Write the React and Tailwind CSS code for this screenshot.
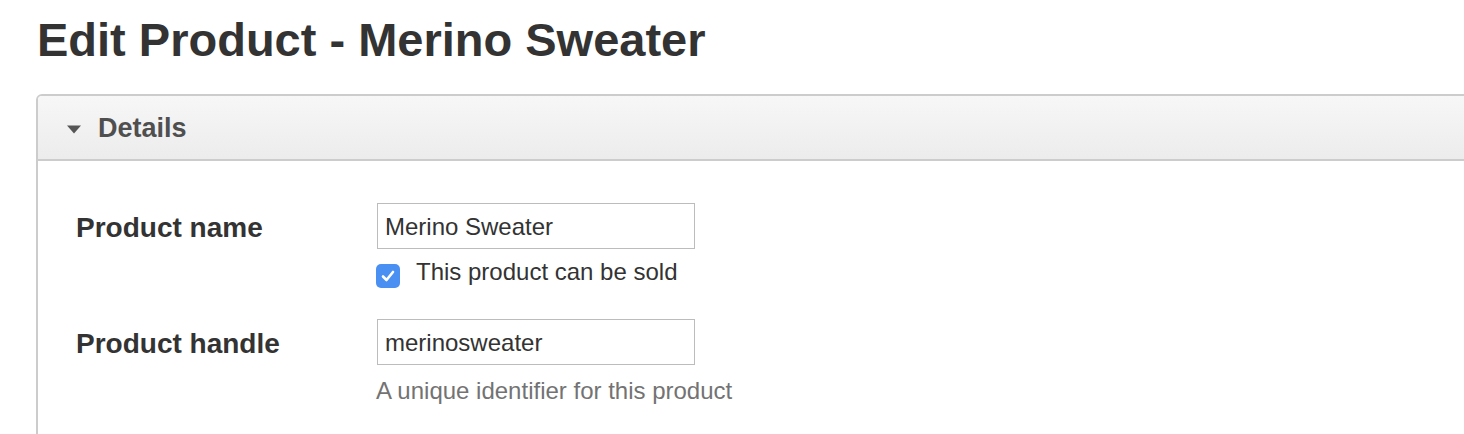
export default function App() {
  return (
    <div className="w-[1464px] h-[434px] overflow-hidden bg-white text-[#333] font-['Liberation_Sans',Arial,Helvetica,sans-serif]">
      <div className="pl-[37px] pt-[14px]">
        <h1 className="text-[47px] leading-[52px] font-bold text-[#333] m-0">
          Edit Product - Merino Sweater
        </h1>
      </div>
      <div className="mt-[28px] ml-[36px] mr-[-40px] border-2 border-[#cccccc] rounded-tl-[6px] rounded-tr-[6px] h-[600px] overflow-hidden">
        <div className="h-[65px] flex items-center pl-[28px] bg-gradient-to-b from-[#f7f7f7] to-[#ececec] border-b-2 border-[#cccccc]">
          <svg width="16" height="9" viewBox="0 0 16 9" className="mt-[3px]">
            <polygon points="1,0.5 15,0.5 8,8.5" fill="#555555" />
          </svg>
          <span className="ml-[16px] mt-[2px] text-[27px] font-bold text-[#4f4f4f] leading-none">
            Details
          </span>
        </div>
        <div className="bg-white pt-[42px] pl-[38px]">
          <div className="grid grid-cols-[301px_1fr]">
            <div className="text-[28px] leading-[46px] pt-[2px] font-bold text-[#333]">
              Product name
            </div>
            <div>
              <div className="w-[318px] h-[46px] border border-[#bcbcbc] bg-white flex items-center pl-[7px] pt-[1px] text-[24px] text-[#333]">
                Merino Sweater
              </div>
              <div className="mt-[9px] flex items-start">
                <div className="ml-[-1px] mt-[6px] w-[24px] h-[24px] rounded-[5px] bg-[#4a8ff2] flex items-center justify-center">
                  <svg width="20" height="20" viewBox="0 0 20 20">
                    <path
                      d="M5 10.5 L8.5 14 L15 6"
                      fill="none"
                      stroke="white"
                      strokeWidth="2.6"
                      strokeLinecap="round"
                      strokeLinejoin="round"
                    />
                  </svg>
                </div>
                <span className="ml-[16px] text-[24px] leading-[28px] text-[#333]">
                  This product can be sold
                </span>
              </div>
            </div>
          </div>
          <div className="grid grid-cols-[301px_1fr] mt-[31px]">
            <div className="text-[28px] leading-[46px] pt-[2px] font-bold text-[#333]">
              Product handle
            </div>
            <div>
              <div className="w-[318px] h-[46px] border border-[#bcbcbc] bg-white flex items-center pl-[7px] pt-[1px] text-[24px] text-[#333]">
                merinosweater
              </div>
              <div className="mt-[12px] ml-[-1px] text-[24px] leading-[28px] text-[#737373]">
                A unique identifier for this product
              </div>
            </div>
          </div>
        </div>
      </div>
    </div>
  );
}
